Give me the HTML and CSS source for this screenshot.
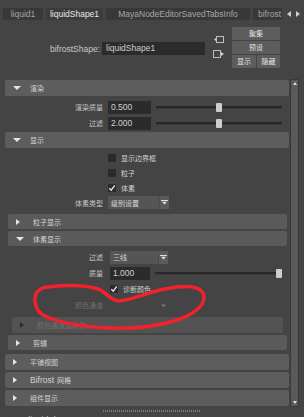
FILE: index.html
```html
<!DOCTYPE html>
<html>
<head>
<meta charset="utf-8">
<link rel="stylesheet" href="styles.css">
</head>
<body>
<div class="tabbar">
  <div class="tab t1">liquid1</div>
  <div class="tab t2 active">liquidShape1</div>
  <div class="tab t3">MayaNodeEditorSavedTabsInfo</div>
  <div class="tab t4">bifrost</div>
  <div class="tab-arrows"><span class="tri-l"></span><span class="tri-r"></span></div>
</div>

<div class="node-row">
  <div class="node-label">bifrostShape:</div>
  <div class="node-field">liquidShape1</div>
  <div class="conn-icons">
    <svg width="12" height="7" viewBox="0 0 12 7"><rect x="3.5" y="0.5" width="7" height="6" fill="none" stroke="#bdbdbd" stroke-width="1"/><path d="M1 3.5 L3.5 1.5 L3.5 5.5 Z" fill="#d0d0d0"/></svg>
    <svg width="12" height="8" viewBox="0 0 12 8"><rect x="0.5" y="0.5" width="7" height="7" fill="none" stroke="#bdbdbd" stroke-width="1"/><path d="M8 2 L11 4 L8 6 Z" fill="#d0d0d0"/></svg>
  </div>
  <div class="btn-grid">
    <div class="btn wide zh">聚集</div>
    <div class="btn wide zh">预设</div>
    <div class="btn zh">显示</div>
    <div class="btn zh">隐藏</div>
  </div>
</div>

<div class="editor">
  <div class="scroll">
    <div class="content">

      <section class="frame top f-render">
        <div class="hdr"><span class="tri-box"><i class="tri-down"></i></span><span class="zh">渲染</span></div>
        <div class="body">
          <div class="row">
            <span class="lbl zh">渲染质量</span>
            <div class="num">0.500</div>
            <div class="slider"><div class="track"></div><div class="handle" style="--v:0.5"></div></div>
          </div>
          <div class="row">
            <span class="lbl zh">过滤</span>
            <div class="num">2.000</div>
            <div class="slider"><div class="track"></div><div class="handle" style="--v:0.5"></div></div>
          </div>
        </div>
      </section>

      <section class="frame top f-display">
        <div class="hdr"><span class="tri-box"><i class="tri-down"></i></span><span class="zh">显示</span></div>
        <div class="body">
          <div class="row r15"><span class="lbl"></span><span class="cb"></span><span class="cb-text zh">显示边界框</span></div>
          <div class="row r15"><span class="lbl"></span><span class="cb"></span><span class="cb-text zh">粒子</span></div>
          <div class="row r15"><span class="lbl"></span><span class="cb checked"><svg width="8" height="8" viewBox="0 0 8 8"><path d="M1.3 4.2 L3.2 6.2 L6.8 1.4" fill="none" stroke="#e8e8e8" stroke-width="1.3"/></svg></span><span class="cb-text zh">体素</span></div>
          <div class="row r15">
            <span class="lbl zh">体素类型</span>
            <div class="dd w60"><span class="zh">级别设置</span><span class="dd-arrow"><svg width="7" height="5" viewBox="0 0 7 5"><rect x="0" y="0" width="7" height="1" fill="#e0e0e0"/><path d="M1 1.8 L6 1.8 L3.5 4.6 Z" fill="#e0e0e0"/></svg></span></div>
          </div>

          <section class="frame sub f-particle">
            <div class="hdr"><span class="tri-box"><i class="tri-right"></i></span><span class="zh">粒子显示</span></div>
          </section>

          <section class="frame sub f-voxel">
            <div class="hdr"><span class="tri-box"><i class="tri-down"></i></span><span class="zh">体素显示</span></div>
            <div class="body">
              <div class="row">
                <span class="lbl zh">过滤</span>
                <div class="dd w58"><span class="zh">三线</span><span class="dd-arrow"><svg width="7" height="5" viewBox="0 0 7 5"><rect x="0" y="0" width="7" height="1" fill="#e0e0e0"/><path d="M1 1.8 L6 1.8 L3.5 4.6 Z" fill="#e0e0e0"/></svg></span></div>
              </div>
              <div class="row">
                <span class="lbl zh">质量</span>
                <div class="num">1.000</div>
                <div class="slider"><div class="track"></div><div class="handle" style="--v:1"></div></div>
              </div>
              <div class="row">
                <span class="lbl"></span><span class="cb checked"><svg width="8" height="8" viewBox="0 0 8 8"><path d="M1.3 4.2 L3.2 6.2 L6.8 1.4" fill="none" stroke="#e8e8e8" stroke-width="1.3"/></svg></span><span class="cb-text zh">诊断颜色</span>
              </div>
              <div class="row disabled">
                <span class="lbl zh">颜色通道</span>
                <div class="dd w58 off"><span></span><span class="dd-arrow"><svg width="7" height="5" viewBox="0 0 7 5"><path d="M1 1.5 L6 1.5 L3.5 4.3 Z" fill="#7a7a7a"/></svg></span></div>
              </div>
              <section class="frame subsub">
                <div class="hdr off"><span class="tri-box"><i class="tri-right"></i></span><span class="zh">颜色通道重映射</span></div>
              </section>
            </div>
          </section>

          <section class="frame sub f-clip">
            <div class="hdr"><span class="tri-box"><i class="tri-right"></i></span><span class="zh">剪辑</span></div>
          </section>
        </div>
      </section>

      <section class="frame top f-tile">
        <div class="hdr"><span class="tri-box"><i class="tri-right"></i></span><span class="zh">平铺视图</span></div>
      </section>
      <section class="frame top f-mesh">
        <div class="hdr"><span class="tri-box"><i class="tri-right"></i></span><span>Bifrost</span><span class="zh sp">网格</span></div>
      </section>
      <section class="frame top f-comp">
        <div class="hdr"><span class="tri-box"><i class="tri-right"></i></span><span class="zh">组件显示</span></div>
      </section>

    </div>
    <div class="scrollbar"><i class="sb-up"></i><i class="sb-down"></i></div>
  </div>
  <div class="grip"><span class="dots"></span></div>
  <div class="notes"><span class="zh">注释:</span> <span>liquidShape1</span></div>
</div>

<svg class="annotation" width="304" height="417" viewBox="0 0 304 417">
  <path d="M36,306 C33,296 36,288 48,287 C65,285 85,285 98,289 C106,292 110,300 118,301 C130,301 145,293 165,289 C180,286 198,284 203,293 C207,303 198,312 180,319 C160,326 135,329 110,328 C85,327 60,323 45,316 C39,313 37,310 36,306 Z" fill="none" stroke="#f2212b" stroke-width="3.5" stroke-linejoin="round" stroke-linecap="round"/>
</svg>
</body>
</html>
```

FILE: styles.css
```css
* {
  box-sizing: border-box;
  margin: 0;
  padding: 0;
}

html, body {
  width: 304px;
  height: 417px;
  overflow: hidden;
}

body {
  position: relative;
  background: #444444;
  font-family: "Liberation Sans", "Noto Sans CJK SC", sans-serif;
  font-size: 8.5px;
  color: #c4c4c4;
}

.zh {
  font-family: "Noto Sans CJK SC", sans-serif;
  font-size: 7px;
}

/* ---------- tab bar ---------- */
.tabbar {
  display: flex;
  height: 12px;
  margin-top: 8px;
  padding-left: 3px;
  gap: 3px;
}

.tab {
  flex: none;
  background: #383838;
  color: #a6a6a6;
  line-height: 12px;
  text-align: center;
  white-space: nowrap;
  overflow: hidden;
}

.tab.active {
  color: #e8e8e8;
  background: #3c3c3c;
}

.t1 { width: 40px; }
.t2 { width: 57px; }
.t3 { width: 144px; }
.t4 { width: 29px; text-align: left; padding-left: 5px; }

.tab-arrows {
  display: flex;
  align-items: center;
  gap: 5px;
  margin-left: 2px;
}

.tri-l {
  width: 0;
  height: 0;
  border-top: 3px solid transparent;
  border-bottom: 3px solid transparent;
  border-right: 4px solid #cfcfcf;
}

.tri-r {
  width: 0;
  height: 0;
  border-top: 3px solid transparent;
  border-bottom: 3px solid transparent;
  border-left: 4px solid #cfcfcf;
}

/* ---------- node row ---------- */
.node-row {
  display: flex;
  align-items: center;
  height: 43px;
  margin-top: 7px;
  padding-left: 44px;
}

.node-label {
  width: 58px;
  padding-right: 2px;
  text-align: right;
  color: #c8c8c8;
}

.node-field {
  width: 103px;
  height: 13px;
  line-height: 13px;
  padding-left: 4px;
  background: #2b2b2b;
  color: #d0d0d0;
}

.conn-icons {
  align-self: flex-start;
  display: flex;
  flex-direction: column;
  gap: 7px;
  margin-top: 9px;
  margin-left: 8px;
  width: 12px;
}

.conn-icons svg {
  display: block;
}

.btn-grid {
  align-self: flex-start;
  display: grid;
  grid-template-columns: 24px 23px;
  grid-template-rows: 13px 13px 13px;
  gap: 1px;
  margin-left: 7px;
}

.btn {
  background: #5d5d5d;
  color: #e2e2e2;
  text-align: center;
  line-height: 13px;
  border-radius: 1px;
}

.btn.wide {
  grid-column: span 2;
}

/* ---------- editor ---------- */
.editor {
  margin-top: 5px;
}

.scroll {
  display: flex;
  gap: 1px;
  height: 333px;
  padding: 5px 5px 0 5px;
}

.content {
  flex: 1;
  min-width: 0;
  display: flex;
  flex-direction: column;
}

.f-tile,
.f-mesh,
.f-comp {
  margin-top: 2px;
}

.hdr {
  display: flex;
  align-items: center;
  height: 16px;
  background: #5d5d5d;
  border-radius: 2px;
  color: #d2d2d2;
  white-space: nowrap;
}

.hdr .sp {
  margin-left: 3px;
}

.tri-box {
  flex: none;
  display: flex;
  align-items: center;
  width: 25px;
  padding-left: 8px;
}

.tri-down {
  width: 0;
  height: 0;
  border-left: 4px solid transparent;
  border-right: 4px solid transparent;
  border-top: 4px solid #e4e4e4;
}

.tri-right {
  width: 0;
  height: 0;
  border-top: 3.5px solid transparent;
  border-bottom: 3.5px solid transparent;
  border-left: 4.5px solid #e4e4e4;
}

.f-render > .body {
  padding-top: 3px;
  padding-bottom: 1px;
}

.f-display > .body {
  padding-top: 2px;
  padding-bottom: 2px;
}

/* rows */
.row {
  display: flex;
  align-items: center;
  height: 16px;
  padding-right: 7px;
}

.row.r15 {
  height: 15px;
}

.lbl {
  flex: none;
  width: 98px;
  margin-right: 5px;
  text-align: right;
  color: #c6c6c6;
}

.num {
  flex: none;
  width: 43px;
  height: 13px;
  line-height: 13px;
  padding-left: 3px;
  background: #2b2b2b;
  color: #d0d0d0;
}

.slider {
  flex: 1;
  position: relative;
  height: 13px;
  margin-left: 5px;
}

.track {
  position: absolute;
  left: 0;
  right: 0;
  top: 5px;
  height: 3px;
  background: #272727;
  border-radius: 1px;
  border-bottom: 1px solid #3a3a3a;
}

.handle {
  position: absolute;
  top: 2px;
  left: calc((100% - 6px) * var(--v));
  width: 6px;
  height: 9px;
  background: #cdcdcd;
  border-radius: 1px;
}

.cb {
  flex: none;
  width: 8px;
  height: 8px;
  background: #2b2b2b;
}

.cb svg {
  display: block;
}

.cb-text {
  margin-left: 5px;
  color: #cfcfcf;
}

.dd {
  flex: none;
  display: flex;
  align-items: center;
  height: 13px;
  background: #555555;
  color: #d6d6d6;
}

.dd.w60 { width: 61px; }
.dd.w58 { width: 58px; }

.dd > span:first-child {
  padding-left: 3px;
}

.dd-arrow {
  margin-left: auto;
  width: 10px;
  height: 13px;
  display: flex;
  align-items: center;
  justify-content: center;
  background: #5b5b5b;
  border-left: 1px solid #4b4b4b;
}

.dd-arrow svg {
  display: block;
}

.dd.off {
  background: transparent;
}

.dd.off .dd-arrow {
  background: transparent;
  border-left: none;
}

.row.disabled .lbl {
  color: #6e6e6e;
}

/* sub frames */
.frame.sub {
  margin-left: 3px;
  margin-right: 2px;
}

.f-particle {
  margin-top: 4px;
}

.f-voxel {
  margin-top: 2px;
}

.frame.sub .hdr {
  height: 15px;
  background: #5a5a5a;
}

.frame.sub .row {
  padding-right: 5px;
}

.frame.sub .lbl {
  width: 95px;
  margin-right: 7px;
}

.frame.sub .num {
  width: 40px;
}

.f-voxel > .body {
  padding-top: 3px;
  padding-bottom: 2px;
}

.f-clip .hdr {
  height: 16px;
}

.frame.subsub {
  margin: 4px 4px 0 4px;
}

.frame.subsub .hdr.off {
  height: 16px;
  background: #525252;
  color: #707070;
}

.hdr.off .tri-right {
  border-left-color: #2c2c2c;
}

/* scrollbar */
.scrollbar {
  flex: none;
  width: 9px;
  height: 328px;
  margin-top: -1px;
  background: #5a5a5a;
  border: 1px solid #383838;
  display: flex;
  flex-direction: column;
  justify-content: space-between;
  align-items: center;
  padding: 2px 0;
}

.sb-up {
  width: 0;
  height: 0;
  border-left: 2.5px solid transparent;
  border-right: 2.5px solid transparent;
  border-bottom: 3px solid #dcdcdc;
}

.sb-down {
  width: 0;
  height: 0;
  border-left: 2.5px solid transparent;
  border-right: 2.5px solid transparent;
  border-top: 3px solid #dcdcdc;
}

/* bottom */
.grip {
  height: 5px;
  padding-left: 103px;
  display: flex;
  align-items: center;
}

.dots {
  width: 97px;
  height: 2px;
  background: repeating-linear-gradient(90deg, #7a7a7a 0 1px, transparent 1px 2px);
}

.notes {
  padding-left: 10px;
  padding-top: 2px;
  line-height: 10px;
  color: #c8c8c8;
  white-space: nowrap;
}

/* annotation overlay */
.annotation {
  position: absolute;
  left: 0;
  top: 0;
  pointer-events: none;
}
```
